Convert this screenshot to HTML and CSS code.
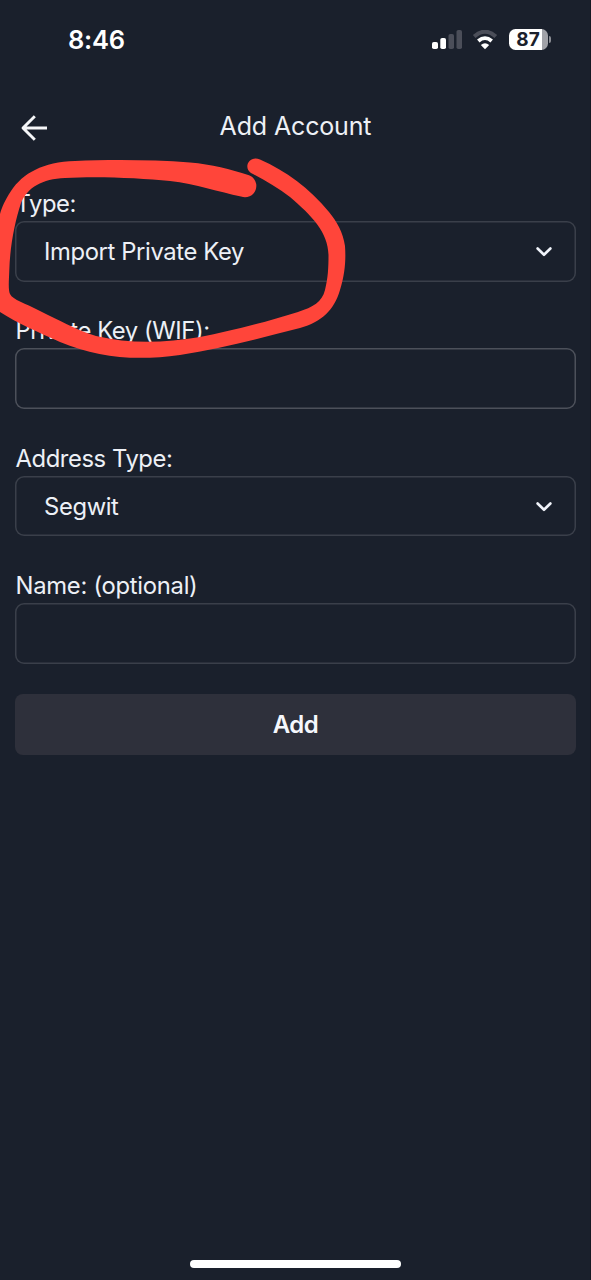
FILE: index.html
```html
<!DOCTYPE html>
<html lang="en">
<head>
<meta charset="utf-8">
<title>Add Account</title>
<link rel="stylesheet" href="styles.css">
</head>
<body>
<div class="screen">
  <div class="status">
    <span class="time">8:46</span>
    <div class="indicators">
      <svg class="signal" width="31" height="20" viewBox="0 0 31 20">
        <rect x="0" y="12" width="6" height="7" rx="1.8" fill="#fff"/>
        <rect x="8.3" y="8" width="5.7" height="11" rx="1.8" fill="#fff"/>
        <rect x="16.5" y="4" width="5.5" height="15" rx="1.8" fill="#4b4e59"/>
        <rect x="24.5" y="0" width="5.5" height="19" rx="1.8" fill="#4b4e59"/>
      </svg>
      <svg class="wifi" width="26" height="20" viewBox="0 0 26 20">
        <path d="M2.2 6.6Q13-3.2 23.8 6.6" fill="none" stroke="#4b4e59" stroke-width="4"/>
        <path d="M6.3 11Q13 5.2 19.7 11" fill="none" stroke="#fff" stroke-width="3.8"/>
        <path d="M13 19.3L8.8 15.1Q13 11.3 17.2 15.1Z" fill="#fff"/>
      </svg>
      <div class="battery"><span>87</span></div>
      <i class="battery-tip"></i>
    </div>
  </div>
  <header class="header">
    <svg class="back" width="28" height="28" viewBox="0 0 28 28" fill="none" stroke="#f5f6f8" stroke-width="2.9" stroke-linejoin="round">
      <path d="M27 14H3M14.8 2.2L3 14L14.8 25.8"/>
    </svg>
    <h1 class="title"><span>Add Account</span></h1>
  </header>
  <main class="form">
    <div class="group">
      <label class="label type">Type:</label>
      <div class="field"><span class="import">Import Private Key</span><svg class="chevron" width="16" height="10" viewBox="0 0 16 10"><path d="M1.6 1.5L8 7.8L14.4 1.5"/></svg></div>
    </div>
    <div class="group">
      <label class="label key">Private Key (WIF):</label>
      <div class="field bright"></div>
    </div>
    <div class="group">
      <label class="label address">Address Type:</label>
      <div class="field"><span class="segwit">Segwit</span><svg class="chevron" width="16" height="10" viewBox="0 0 16 10"><path d="M1.6 1.5L8 7.8L14.4 1.5"/></svg></div>
    </div>
    <div class="group">
      <label class="label name">Name: (optional)</label>
      <div class="field"></div>
    </div>
    <button class="add">Add</button>
  </main>
  <div class="home"></div>
  <svg class="marker" width="591" height="400" viewBox="0 0 591 400">
    <path d="M249 175.300C230 169 212 164.500 190 162.500C152 159.500 108 159.500 75 161C43 162 23 173 11 191C5 200 2 207 0 214L-6 235V306L0 312C17 323 38 332 60 342C98 358 136 361 180 355C220 349 261 338 300 328C322 322 334 310 340 290C345 274 346 260 345 246C343 232 337 222 329 212C309 188 286 171 260 159.500C249 155 243 168 251 173C264 180 278 188 290 197C312 216 328 232 328.500 255C328.500 268 328 278 325 290C322 302 313 307 298 312C266 322 231 331 200 337C164 343 130 344 96 336C76 330 57 319 40 311C25 303 13 300 10 294C8 289 9 280 9.300 270C10 246 15 221 21 203C28 187 42 179 65 178C98 176 140 178 170 181C196 184 219 192 241 196.500A11 11 0 0 0 249 175.300Z"/>
  </svg>
</div>
</body>
</html>
```
FILE: styles.css
```css
* { box-sizing: border-box; }
body { margin: 0; background: #1a202c; color: #edf0f6; font-family: Inter, "Liberation Sans", sans-serif; }
.screen { position: relative; width: 591px; height: 1280px; overflow: hidden; display: flex; flex-direction: column; border-right: 1px solid #151822; }
.status { height: 80px; padding: 0 39px 2px 68px; display: flex; align-items: center; justify-content: space-between; }
.time { font-size: 25.500px; font-weight: 600; letter-spacing: -0.200px; color: #fff; }
.indicators { display: flex; align-items: center; }
.signal, .wifi { position: relative; top: 1px; }
.signal { left: 1px; }
.wifi { margin: 0 11px 0 10px; }
.battery { width: 39px; height: 21px; border-radius: 6.500px; background: linear-gradient(90deg, #fff 0 33px, #a1a2a8 33px); color: #1a202c; font-size: 19px; font-weight: 700; line-height: 22px; padding-right: 1px; text-align: center; }
.battery-tip { width: 2px; height: 7px; margin-left: 1px; border-radius: 0 3px 3px 0; background: #8b8d94; }
.header { height: 111px; display: flex; align-items: flex-start; padding: 34px 20px 0; }
.title { flex: 1; margin: -4px 27px 0 0; text-align: center; font-size: 25px; line-height: 32px; font-weight: 400; letter-spacing: -0.150px; }
.form { display: flex; flex-direction: column; padding: 0 14px 0 15px; }
.group { height: 127.400px; display: flex; flex-direction: column; }
.label { height: 30px; line-height: 26px; padding-left: 0.500px; font-size: 23.800px; letter-spacing: -0.420px; white-space: nowrap; }
.name { letter-spacing: -0.280px; }
.field { height: 60.500px; border-radius: 9px; box-shadow: inset 0 0 0 1.500px #3a3f4a; display: flex; align-items: center; justify-content: space-between; padding: 1px 24px 0 29px; font-size: 23.800px; letter-spacing: -0.370px; }
.bright { box-shadow: inset 0 0 0 1.500px #4c505a; }
.chevron path { fill: none; stroke: #f0f3fa; stroke-width: 2.600; stroke-linejoin: round; stroke-linecap: round; }
.add { height: 60.500px; margin-top: -6.500px; padding: 0; border: 0; border-radius: 8px; background: #2e303b; color: #f5f7fc; font: 600 24px Inter, sans-serif; letter-spacing: -0.500px; }
.home { width: 211px; height: 8px; border-radius: 4px; background: #fff; margin: auto auto 12px 190px; }
.marker { position: absolute; left: 0; top: 0; pointer-events: none; }
.marker path { fill: #ff453a; }
```
